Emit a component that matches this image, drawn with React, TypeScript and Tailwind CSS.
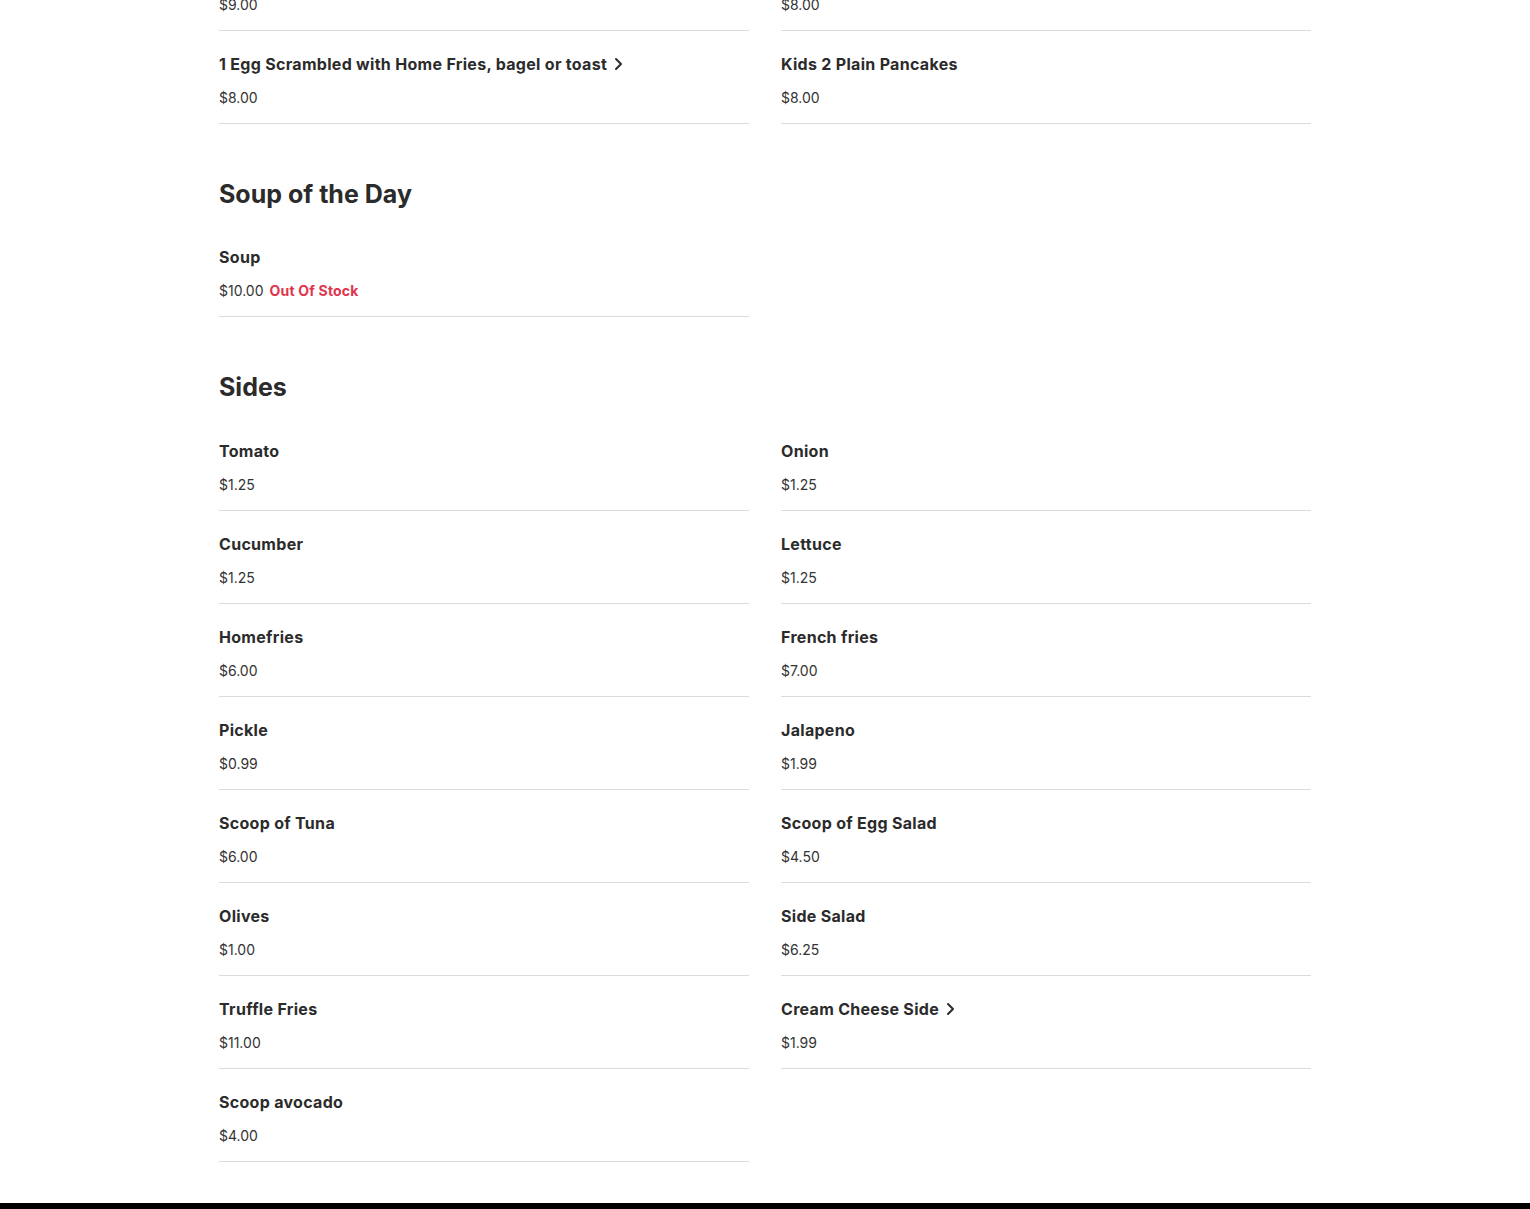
import React from "react";

type Item = { name: string; price: string; chevron?: boolean; oos?: boolean };

const Chevron = () => (
  <svg width="9" height="14" viewBox="0 0 9 14" className="ml-[7px] shrink-0" fill="none">
    <path d="M2 2l5 5-5 5" stroke="#2b2b2b" strokeWidth="2" strokeLinecap="round" strokeLinejoin="round" />
  </svg>
);

const Row = ({ item }: { item: Item }) => (
  <div className="border-b border-[#dcdcdc] pt-[21px] pb-[15px]">
    <div className="flex items-center h-[24px] text-[16px] font-bold tracking-[0.3px] text-[#2b2b2b] leading-[24px]">
      <span>{item.name}</span>
      {item.chevron && <Chevron />}
    </div>
    <div className="mt-[12px] flex items-center h-[20px] text-[14px] leading-[20px] text-[#333]">
      <span>{item.price}</span>
      {item.oos && <span className="ml-[6px] font-bold tracking-[0.2px] text-[#e0344c]">Out Of Stock</span>}
    </div>
  </div>
);

const Grid = ({ items }: { items: Item[] }) => (
  <div className="grid grid-cols-2 gap-x-[32px]">
    {items.map((it, i) => (
      <Row key={i} item={it} />
    ))}
  </div>
);

const Section = ({ title, items, tight }: { title: string; items: Item[]; tight?: boolean }) => (
  <section className="mt-[54px]">
    <h2 className={`text-[25px] leading-[32px] font-bold text-[#2b2b2b] ${tight ? "mb-[14px]" : "mb-[15px]"}`}>{title}</h2>
    <Grid items={items} />
  </section>
);

export default function App() {
  const sides: Item[] = [
    { name: "Tomato", price: "$1.25" },
    { name: "Onion", price: "$1.25" },
    { name: "Cucumber", price: "$1.25" },
    { name: "Lettuce", price: "$1.25" },
    { name: "Homefries", price: "$6.00" },
    { name: "French fries", price: "$7.00" },
    { name: "Pickle", price: "$0.99" },
    { name: "Jalapeno", price: "$1.99" },
    { name: "Scoop of Tuna", price: "$6.00" },
    { name: "Scoop of Egg Salad", price: "$4.50" },
    { name: "Olives", price: "$1.00" },
    { name: "Side Salad", price: "$6.25" },
    { name: "Truffle Fries", price: "$11.00" },
    { name: "Cream Cheese Side", price: "$1.99", chevron: true },
    { name: "Scoop avocado", price: "$4.00" },
  ];
  return (
    <div className="bg-white min-h-[1209px] flex flex-col" style={{ fontFamily: "Inter, 'Noto Sans', sans-serif" }}>
      <div className="w-[1092px] mx-auto">
        <div className="grid grid-cols-2 gap-x-[32px]">
          <div className="border-b border-[#dcdcdc] h-[31px] text-[14px] leading-[20px] text-[#333]">
            <div className="-mt-[5px]">$9.00</div>
          </div>
          <div className="border-b border-[#dcdcdc] h-[31px] text-[14px] leading-[20px] text-[#333]">
            <div className="-mt-[5px]">$8.00</div>
          </div>
        </div>
        <Grid
          items={[
            { name: "1 Egg Scrambled with Home Fries, bagel or toast", price: "$8.00", chevron: true },
            { name: "Kids 2 Plain Pancakes", price: "$8.00" },
          ]}
        />
        <Section title="Soup of the Day" tight items={[{ name: "Soup", price: "$10.00", oos: true }]} />
        <Section title="Sides" items={sides} />
      </div>
      <div className="mt-[41px] h-[6px] bg-black" />
    </div>
  );
}
